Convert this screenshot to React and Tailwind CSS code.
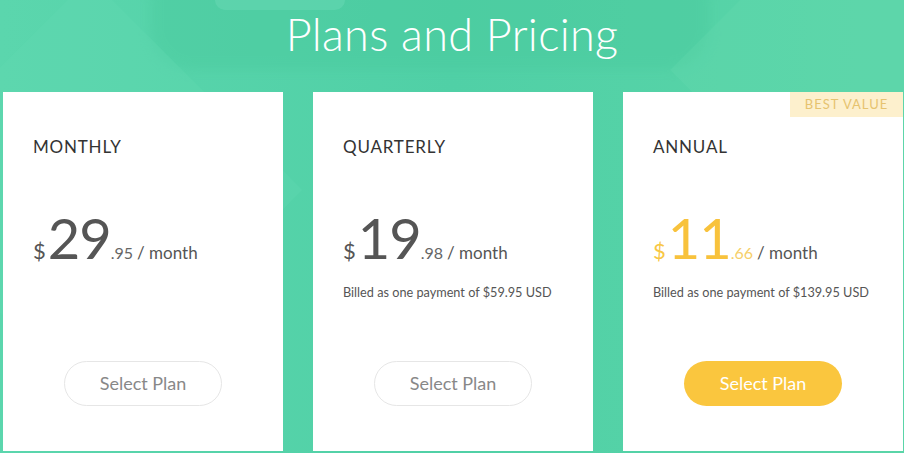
import React from "react";

const plans = [
  { name: "MONTHLY", whole: "29", cents: ".95", billed: null, best: false },
  { name: "QUARTERLY", whole: "19", cents: ".98", billed: "Billed as one payment of $59.95 USD", best: false },
  { name: "ANNUAL", whole: "11", cents: ".66", billed: "Billed as one payment of $139.95 USD", best: true },
];

function PlanCard({ plan }) {
  const accent = plan.best;
  return (
    <div className="relative bg-white h-[359px] w-[280px] pl-[30px] pt-[45px]">
      {plan.best && (
        <div className="absolute top-0 right-0 w-[113px] h-[25px] bg-[#fdf0cd] text-[#e6c36f] text-[13px] tracking-[1px] flex items-center justify-center">
          BEST VALUE
        </div>
      )}
      <h3 className="text-[17px] leading-5 tracking-[0.8px] text-[#333]">{plan.name}</h3>
      <div className="mt-[53px] flex items-baseline h-[58px]">
        <span className={`text-[22px] mr-[2px] ${accent ? "text-[#f8c744]" : "text-[#555]"}`}>$</span>
        <span className={`text-[56px] leading-none tracking-[-1px] ${accent ? "text-[#f8c23c]" : "text-[#555]"}`}>{plan.whole}</span>
        <span className={`text-[16px] ${accent ? "text-[#f6cf6a]" : "text-[#666]"}`}>{plan.cents}</span>
        <span className="text-[17px] text-[#555] ml-[4px]">/ month</span>
      </div>
      <p className="mt-[16px] h-[16px] text-[12.7px] leading-4 text-[#555]">{plan.billed}</p>
      <div className="mt-[61px] pr-[30px] flex justify-center">
        <button
          className={`w-[158px] h-[45px] rounded-full text-[18px] ${
            accent ? "bg-[#fac63e] text-white" : "border border-[#e6e6e6] text-[#888]"
          }`}
        >
          Select Plan
        </button>
      </div>
    </div>
  );
}

export default function App() {
  return (
    <div
      className="relative w-[904px] h-[453px] overflow-hidden bg-gradient-to-r from-[#5bd6ad] via-[#50d0a6] to-[#5ad5a8]"
      style={{ fontFamily: "Lato, 'Open Sans', sans-serif" }}
    >
      {/* soft background shapes */}
      <div className="absolute left-[150px] -top-[40px] w-[560px] h-[110px] rounded-[40px] bg-[#48c99c] opacity-40 blur-[6px]" />
      <div className="absolute left-[215px] -top-[20px] w-[130px] h-[30px] rounded-[10px] bg-[#70dcb8] opacity-40" />
      <div className="absolute left-[-60px] top-[40px] w-[300px] h-[300px] rotate-45 bg-[#65dab3] opacity-30" />
      <div className="absolute right-[-80px] top-[-60px] w-[260px] h-[260px] rotate-45 bg-[#68dbb0] opacity-30" />

      <div className="relative flex flex-col items-center">
        <h1 className="mt-[6px] text-[45px] font-light leading-[56px] text-white tracking-[0.3px]">Plans and Pricing</h1>
        <div className="mt-[30px] ml-[3px] self-start flex gap-[30px]">
          {plans.map((p) => (
            <PlanCard key={p.name} plan={p} />
          ))}
        </div>
      </div>
    </div>
  );
}
